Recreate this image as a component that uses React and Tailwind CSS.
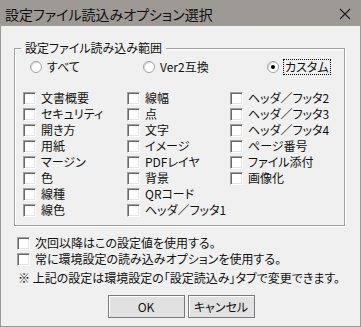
import React from "react";

const font = { fontFamily: '"Noto Sans CJK JP", "Noto Sans", sans-serif' };

function Box() {
  return (
    <span className="inline-block w-[13px] h-[13px] shrink-0 bg-white border border-t-[#a0a0a0] border-l-[#a0a0a0] border-r-white border-b-white shadow-[inset_1px_1px_0_#696969,inset_-1px_-1px_0_#e3e3e3]" />
  );
}

function Check({ label }) {
  return (
    <div className="flex items-center h-[16px] gap-[5px]">
      <Box />
      <span className="leading-[16px] whitespace-nowrap">{label}</span>
    </div>
  );
}

function Radio({ label, checked }) {
  return (
    <div className="flex items-center h-[16px] gap-[5px]">
      <span className="relative inline-flex items-center justify-center w-[12px] h-[12px] rounded-full bg-white border border-[#a0a0a0] shadow-[inset_1px_1px_0_#d8d8d8]">
        {checked && <span className="w-[4px] h-[4px] rounded-full bg-black" />}
      </span>
      <span
        className={
          "leading-[14px] whitespace-nowrap " +
          (checked ? "outline outline-1 outline-dotted outline-black outline-offset-0 px-[1px]" : "")
        }
      >
        {label}
      </span>
    </div>
  );
}

export default function App() {
  const items = [
    "文書概要",
    "セキュリティ",
    "開き方",
    "用紙",
    "マージン",
    "色",
    "線種",
    "線色",
    "線幅",
    "点",
    "文字",
    "イメージ",
    "PDFレイヤ",
    "背景",
    "QRコード",
    "ヘッダ／フッタ1",
    "ヘッダ／フッタ2",
    "ヘッダ／フッタ3",
    "ヘッダ／フッタ4",
    "ページ番号",
    "ファイル添付",
    "画像化",
  ];
  return (
    <div
      style={font}
      className="w-[361px] h-[327px] bg-[#f0f0f0] border border-[#9d9995] flex flex-col text-[12px] text-[#111] [font-feature-settings:'palt']"
    >
      <div className="h-[25px] shrink-0 bg-[#9d9995] flex items-center justify-between pl-[4px] pr-[9px]">
        <span className="text-[14px] leading-[16px] text-[#101010]">設定ファイル読込みオプション選択</span>
        <svg width="12" height="12" viewBox="0 0 12 12">
          <path d="M1 1 L11 11 M11 1 L1 11" stroke="#1a1a1a" strokeWidth="1.1" />
        </svg>
      </div>

      <fieldset className="mt-[14px] ml-[13px] w-[331px] border border-[#a0a0a0] shadow-[inset_1px_1px_0_#fff,1px_1px_0_#fff] pb-[7px]">
        <legend className="ml-[6px] px-[4px] leading-[16px]">設定ファイル読み込み範囲</legend>
        <div className="grid grid-cols-[113px_124px_auto] pl-[15px] pt-[3px]">
          <Radio label="すべて" />
          <Radio label="Ver2互換" />
          <Radio label="カスタム" checked />
        </div>
        <div className="grid grid-rows-8 grid-flow-col grid-cols-[104px_103px_auto] pl-[8px] mt-[15px]">
          {items.map((t) => (
            <Check key={t} label={t} />
          ))}
        </div>
      </fieldset>

      <div className="pl-[16px] mt-[9px] flex flex-col">
        <Check label="次回以降はこの設定値を使用する。" />
        <Check label="常に環境設定の読み込みオプションを使用する。" />
        <div className="mt-[3px] leading-[16px] pl-[1px] whitespace-nowrap">
          ※ 上記の設定は環境設定の「設定読込み」タブで変更できます。
        </div>
      </div>

      <div className="flex justify-center gap-[3px] mt-[9px] pl-[1px]">
        <button className="w-[77px] h-[23px] border border-[#7a7a7a] bg-[#e1e1e1] shadow-[inset_1px_1px_0_#fff] text-[12px] leading-[16px]">
          OK
        </button>
        <button className="w-[67px] h-[23px] border border-[#7a7a7a] bg-[#e1e1e1] shadow-[inset_1px_1px_0_#fff] text-[12px] leading-[16px]">
          キャンセル
        </button>
      </div>
    </div>
  );
}
